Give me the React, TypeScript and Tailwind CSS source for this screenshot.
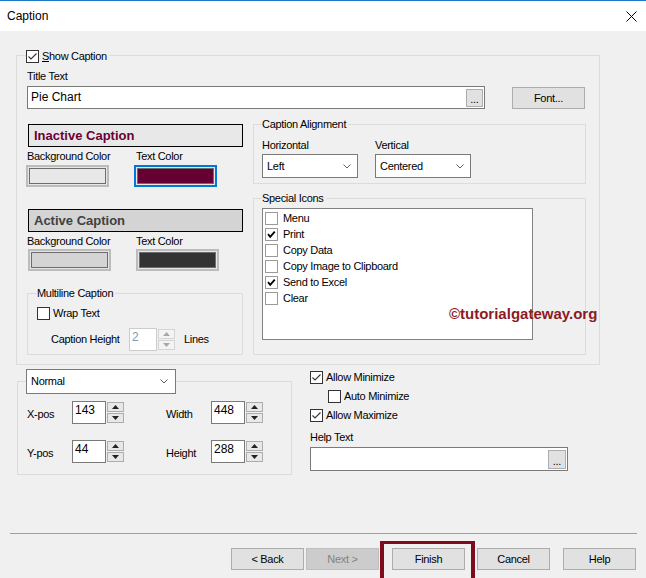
import React from "react";

function Box({ checked = false, kind = "win" }: { checked?: boolean; kind?: "win" | "list" }) {
  return (
    <span
      className={`w-[13px] h-[13px] shrink-0 bg-white border flex items-center justify-center ${
        kind === "win" ? "border-[#333333]" : "border-[#9a9a9a]"
      }`}
    >
      {checked &&
        (kind === "win" ? (
          <svg width="11" height="11" viewBox="0 0 11 11">
            <path d="M1.5 5.5 L4 8 L9.5 2.5" fill="none" stroke="#333" strokeWidth="1.1" />
          </svg>
        ) : (
          <svg width="11" height="11" viewBox="0 0 11 11">
            <path d="M2 5.2 L4.2 7.8 L8.8 2.6" fill="none" stroke="#000" strokeWidth="1.8" />
          </svg>
        ))}
    </span>
  );
}

function Chevron() {
  return (
    <svg width="8" height="5" viewBox="0 0 8 5">
      <path d="M0.5 0.5 L4 4 L7.5 0.5" fill="none" stroke="#606060" strokeWidth="1" />
    </svg>
  );
}

function Tri({ up, color }: { up?: boolean; color: string }) {
  return (
    <svg width="7" height="4" viewBox="0 0 7 4">
      <path d={up ? "M0 4 L3.5 0 L7 4 Z" : "M0 0 L7 0 L3.5 4 Z"} fill={color} />
    </svg>
  );
}

function Spin({ value, disabled = false }: { value: string; disabled?: boolean }) {
  return (
    <div className="flex items-center h-[23px]">
      <div
        className={`h-[23px] bg-white border pl-[2px] leading-[17px] text-[12px] tracking-normal ${
          disabled ? "w-[28px] border-[#cccccc] text-[#7f97b3]" : "w-[34px] border-[#7a7a7a] text-black"
        }`}
      >
        {value}
      </div>
      <div className="flex flex-col w-[17px] h-[21px] gap-[1px] ml-[1px]">
        <div
          className={`flex-1 flex items-center justify-center border ${
            disabled ? "border-[#d5d5d5] bg-[#f4f4f4]" : "border-[#adadad] bg-[#e8e8e8]"
          }`}
        >
          <Tri up color={disabled ? "#a8a8a8" : "#222"} />
        </div>
        <div
          className={`flex-1 flex items-center justify-center border ${
            disabled ? "border-[#d5d5d5] bg-[#f4f4f4]" : "border-[#adadad] bg-[#e8e8e8]"
          }`}
        >
          <Tri color={disabled ? "#a8a8a8" : "#222"} />
        </div>
      </div>
    </div>
  );
}

function Swatch({ fill, focused = false, className = "" }: { fill: string; focused?: boolean; className?: string }) {
  return (
    <div
      className={`w-[83px] h-[22px] p-[1px] border-2 bg-[#e6e6e6] ${
        focused ? "border-[#0078d7]" : "border-[#bcbcbc]"
      } ${className}`}
    >
      <div className="w-full h-full border border-[#6d6d6d]" style={{ backgroundColor: fill }} />
    </div>
  );
}

function Btn({ label, disabled = false }: { label: string; disabled?: boolean }) {
  return (
    <div
      className={`w-[73px] h-[22px] border flex items-center justify-center text-[11px] ${
        disabled ? "bg-[#cccccc] border-[#bfbfbf] text-[#838383]" : "bg-[#e1e1e1] border-[#adadad] text-black"
      }`}
    >
      {label}
    </div>
  );
}

export default function App() {
  const items: [string, boolean][] = [
    ["Menu", false],
    ["Print", true],
    ["Copy Data", false],
    ["Copy Image to Clipboard", false],
    ["Send to Excel", true],
    ["Clear", false],
  ];
  return (
    <div className="w-[646px] h-[578px] bg-[#f0f0f0] overflow-hidden flex flex-col font-['Liberation_Sans',Arial,sans-serif] text-[11px] text-black tracking-[-0.3px]">
      {/* Title bar */}
      <div className="h-[31px] shrink-0 bg-white border-t border-[#1a79c9] flex items-center justify-between pl-[7px] pr-[9px]">
        <span className="text-[12px] tracking-normal">Caption</span>
        <svg width="11" height="11" viewBox="0 0 11 11">
          <path d="M0.5 0.5 L10.5 10.5 M10.5 0.5 L0.5 10.5" stroke="#000" strokeWidth="1" />
        </svg>
      </div>

      {/* Main group */}
      <div className="mt-[24px] ml-[16px] w-[584px] h-[310px] shrink-0 border border-[#dcdcdc] flex flex-col pl-[10px]">
        <div className="-mt-[6px] -ml-[1px] h-[13px] self-start flex items-center gap-[3px] bg-[#f0f0f0] pr-[2px]">
          <Box checked />
          <span className="leading-[13px]">
            <span className="underline">S</span>how Caption
          </span>
        </div>
        <div className="mt-[7px] h-[13px] leading-[13px]">Title Text</div>
        <div className="mt-[3px] flex items-start">
          <div className="w-[458px] h-[23px] border border-[#7a7a7a] bg-white flex items-center justify-between pl-[3px] pr-[1px]">
            <span className="text-[12px] tracking-normal pb-[2px]">Pie Chart</span>
            <div className="w-[17px] h-[18px] border border-[#adadad] bg-[#e1e1e1] flex items-end justify-center pb-[2px] leading-[10px]">
              ...
            </div>
          </div>
          <div className="ml-[27px] mt-[1px]">
            <Btn label="Font..." />
          </div>
        </div>

        {/* Two columns */}
        <div className="mt-[15px] flex items-start">
          {/* Left */}
          <div className="w-[216px] flex flex-col">
            <div className="ml-[1px] w-[215px] h-[23px] border border-black bg-[#e8e8e8] pl-[5px] flex items-center text-[13px] font-bold tracking-normal text-[#6b0033]">
              Inactive Caption
            </div>
            <div className="mt-[3px] h-[13px] leading-[13px] flex">
              <span className="w-[109px]">Background Color</span>
              <span>Text Color</span>
            </div>
            <div className="mt-[2px] flex -ml-[1px]">
              <Swatch fill="#e8e8e8" />
              <Swatch fill="#660033" focused className="ml-[25px]" />
            </div>
            <div className="mt-[22px] ml-[1px] w-[215px] h-[23px] border border-black bg-[#d4d4d4] pl-[5px] flex items-center text-[13px] font-bold tracking-normal text-[#404040]">
              Active Caption
            </div>
            <div className="mt-[3px] h-[13px] leading-[13px] flex">
              <span className="w-[109px]">Background Color</span>
              <span>Text Color</span>
            </div>
            <div className="mt-[1px] flex ml-[1px]">
              <Swatch fill="#d4d4d4" />
              <Swatch fill="#333333" className="ml-[25px]" />
            </div>
            <div className="mt-[22px] w-[216px] h-[62px] border border-[#dcdcdc] flex flex-col">
              <div className="-mt-[7px] ml-[9px] self-start h-[13px] leading-[13px] bg-[#f0f0f0] pr-[2px]">
                Multiline Caption
              </div>
              <div className="mt-[7px] ml-[9px] flex items-center gap-[3px] h-[13px]">
                <Box />
                <span className="leading-[13px]">Wrap Text</span>
              </div>
              <div className="mt-[8px] ml-[23px] flex items-center">
                <span className="w-[78px]">Caption Height</span>
                <Spin value="2" disabled />
                <span className="ml-[9px]">Lines</span>
              </div>
            </div>
          </div>

          {/* Right */}
          <div className="ml-[10px] w-[333px] flex flex-col">
            <div className="h-[60px] border border-[#dcdcdc] flex flex-col pl-[8px]">
              <div className="-mt-[7px] self-start h-[13px] leading-[13px] bg-[#f0f0f0] pr-[2px]">
                Caption Alignment
              </div>
              <div className="mt-[8px] h-[13px] leading-[13px] flex">
                <span className="w-[113px]">Horizontal</span>
                <span>Vertical</span>
              </div>
              <div className="mt-[2px] flex">
                <div className="w-[96px] h-[24px] border border-[#7a7a7a] bg-white flex items-center justify-between pl-[4px] pr-[6px]">
                  <span>Left</span>
                  <Chevron />
                </div>
                <div className="ml-[17px] w-[96px] h-[24px] border border-[#7a7a7a] bg-white flex items-center justify-between pl-[4px] pr-[6px]">
                  <span>Centered</span>
                  <Chevron />
                </div>
              </div>
            </div>
            <div className="relative mt-[14px] h-[157px] border border-[#dcdcdc] flex flex-col pl-[8px]">
              <div className="-mt-[7px] self-start h-[13px] leading-[13px] bg-[#f0f0f0] pr-[2px]">
                Special Icons
              </div>
              <div className="mt-[3px] w-[271px] h-[132px] border border-[#828282] bg-white flex flex-col pt-[3px] pl-[2px]">
                {items.map(([name, c]) => (
                  <div key={name} className="h-[16px] flex items-start">
                    <Box checked={c} kind="list" />
                    <span className="ml-[5px] leading-[13px]">{name}</span>
                  </div>
                ))}
              </div>
              <div className="absolute left-[195px] top-[106px] text-[15px] font-bold tracking-normal text-[#8c1a24] leading-[18px]">
                ©tutorialgateway.org
              </div>
            </div>
          </div>
        </div>
      </div>

      {/* Bottom section */}
      <div className="flex items-start">
        <div className="ml-[17px] w-[275px] flex flex-col">
          <div className="relative z-10 mt-[4px] ml-[9px] w-[150px] h-[25px] border border-[#7a7a7a] bg-white flex items-center justify-between pl-[4px] pr-[7px]">
            <span>Normal</span>
            <Chevron />
          </div>
          <div className="-mt-[13px] h-[94px] border border-[#dcdcdc] flex flex-col pt-[19px] pl-[9px]">
            <div className="flex items-center">
              <span className="w-[45px] pt-[3px]">X-pos</span>
              <Spin value="143" />
              <span className="ml-[42px] w-[45px] pt-[3px]">Width</span>
              <Spin value="448" />
            </div>
            <div className="mt-[16px] flex items-center">
              <span className="w-[45px] pt-[3px]">Y-pos</span>
              <Spin value="44" />
              <span className="ml-[42px] w-[45px] pt-[3px]">Height</span>
              <Spin value="288" />
            </div>
          </div>
        </div>
        <div className="ml-[18px] flex flex-col">
          <div className="mt-[6px] h-[13px] flex items-center gap-[3px]">
            <Box checked />
            <span className="leading-[13px]">Allow Minimize</span>
          </div>
          <div className="mt-[6px] ml-[18px] h-[13px] flex items-center gap-[3px]">
            <Box />
            <span className="leading-[13px]">Auto Minimize</span>
          </div>
          <div className="mt-[6px] h-[13px] flex items-center gap-[3px]">
            <Box checked />
            <span className="leading-[13px]">Allow Maximize</span>
          </div>
          <div className="mt-[9px] h-[13px] leading-[13px]">Help Text</div>
          <div className="mt-[3px] w-[258px] h-[24px] border border-[#7a7a7a] bg-white flex items-center justify-end pr-[1px]">
            <div className="w-[18px] h-[19px] border border-[#adadad] bg-[#e1e1e1] flex items-end justify-center pb-[2px] leading-[10px]">
              ...
            </div>
          </div>
        </div>
      </div>

      {/* Separator */}
      <div className="mt-[58px] ml-[10px] w-[627px] h-[1px] bg-[#a0a0a0] shrink-0" />

      {/* Buttons */}
      <div className="mt-[14px] pl-[231px] flex items-start shrink-0">
        <Btn label="< Back" />
        <div className="ml-[2px]">
          <Btn label="Next >" disabled />
        </div>
        <div className="ml-[1px] -mt-[7px] h-[45px] border-x-4 border-t-[3px] border-[#7f0c1c] pt-[4px] pl-[8px] pr-[6px]">
          <Btn label="Finish" />
        </div>
        <div className="ml-[2px]">
          <Btn label="Cancel" />
        </div>
        <div className="ml-[13px]">
          <Btn label="Help" />
        </div>
      </div>
    </div>
  );
}
